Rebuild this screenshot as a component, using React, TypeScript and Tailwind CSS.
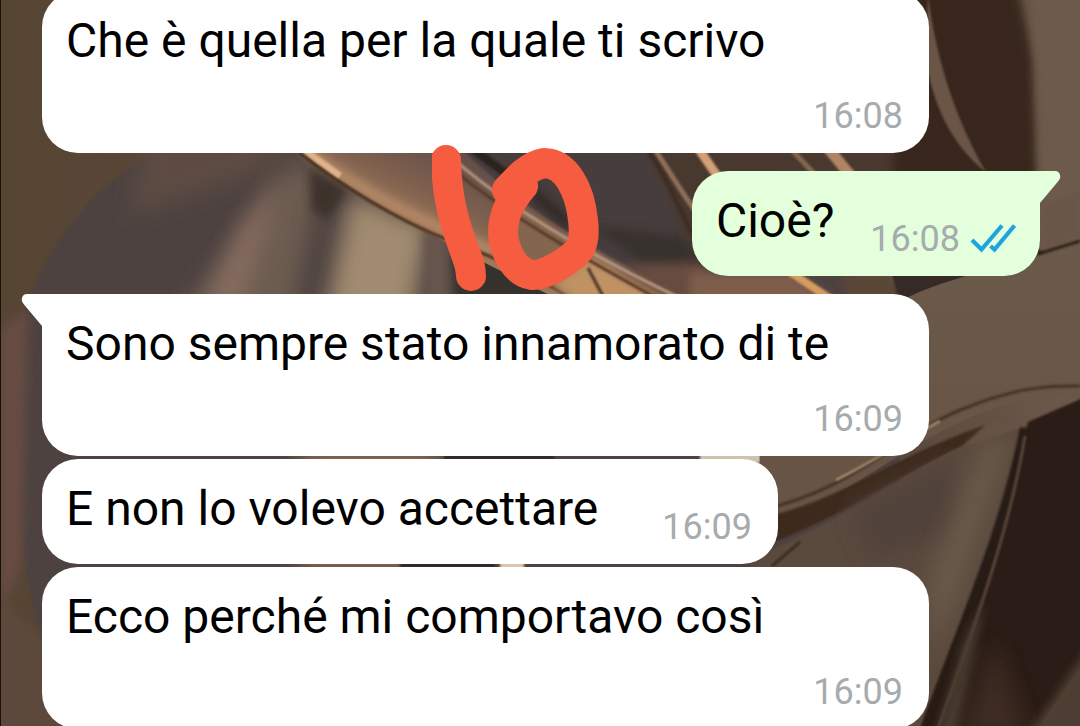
import { ReactNode } from "react";

function Wallpaper() {
  return (
    <svg
      className="absolute inset-0 h-full w-full"
      viewBox="0 0 1080 726"
      preserveAspectRatio="none"
      aria-hidden="true"
    >
      <defs>
        <filter id="fine" filterUnits="userSpaceOnUse" x="-60" y="-60" width="1200" height="850"><feGaussianBlur stdDeviation="1.2" /></filter>
        <filter id="mid" filterUnits="userSpaceOnUse" x="-60" y="-60" width="1200" height="850"><feGaussianBlur stdDeviation="5" /></filter>
        <filter id="wide" filterUnits="userSpaceOnUse" x="-60" y="-60" width="1200" height="850"><feGaussianBlur stdDeviation="11" /></filter>
        <linearGradient id="base" x1="0" y1="0" x2="1" y2="0">
          <stop offset="0" stopColor="#574534" />
          <stop offset="0.5" stopColor="#5a473c" />
          <stop offset="0.85" stopColor="#5b4a3e" />
          <stop offset="1" stopColor="#6d5a4b" />
        </linearGradient>
        <linearGradient id="gold" gradientUnits="userSpaceOnUse" x1="440" y1="150" x2="400" y2="230">
          <stop offset="0" stopColor="#65504a" />
          <stop offset="0.5" stopColor="#80614f" />
          <stop offset="1" stopColor="#a67d5c" />
        </linearGradient>
        <linearGradient id="arm" x1="0" y1="0" x2="0" y2="1">
          <stop offset="0" stopColor="#6b5949" />
          <stop offset="1" stopColor="#665345" />
        </linearGradient>
      </defs>
      <rect width="1080" height="726" fill="url(#base)" />

      <path d="M30 294 C60 225 110 170 170 148 L620 148 L900 300 L900 726 L70 726 C30 650 -10 420 30 294Z" fill="#4d433f" filter="url(#fine)" />
      <path d="M0 330 L28 310 L22 560 L0 620Z" fill="#664c43" filter="url(#mid)" />
      <path d="M150 120 L330 120 L250 176 L130 215Z" fill="#5d4b42" filter="url(#wide)" />
      <path d="M300 155 L170 330 L290 330 L320 180Z" fill="#6c5b4f" filter="url(#wide)" />
      <path d="M285 165 L240 310 L205 310 L240 230Z" fill="#876c60" filter="url(#wide)" />
      <path d="M350 195 L430 225 L410 330 L322 330Z" fill="#a08a70" filter="url(#wide)" />
      <path d="M310 168 L346 190 L328 220 L312 210Z" fill="#3d302b" filter="url(#mid)" />
      <path d="M424 230 L450 240 L452 330 L426 330Z" fill="#66544e" filter="url(#mid)" />
      <path d="M452 250 L560 270 L590 320 L456 320Z" fill="#35302d" filter="url(#mid)" />
      <rect x="300" y="450" width="140" height="120" fill="#8b6c58" filter="url(#wide)" />
      <rect x="444" y="450" width="110" height="12" fill="#302a27" filter="url(#fine)" />
      <rect x="400" y="560" width="95" height="10" fill="#302a27" filter="url(#fine)" />
      <rect x="700" y="453" width="60" height="10" fill="#cfc3b0" filter="url(#fine)" />
      <rect x="500" y="562" width="24" height="8" fill="#d8c6ae" filter="url(#fine)" />

      <path d="M302 153 L470 148 L720 310 L580 310 C500 270 400 225 302 153Z" fill="url(#gold)" />
      <path d="M306 150 C370 198 430 224 500 254" stroke="#b98e6a" strokeWidth="9" fill="none" filter="url(#mid)" />
      <path d="M304 150 L340 176" stroke="#dfb48c" strokeWidth="7" filter="url(#fine)" />
      <path d="M300 153 C340 186 400 221 450 241 C510 263 550 281 590 313" stroke="#4b3020" strokeWidth="3" fill="none" filter="url(#fine)" />
      <path d="M500 200 L590 240 L600 254 L560 284 L500 250Z" fill="#84654f" filter="url(#mid)" />
      <path d="M552 284 L590 256 L680 310 L590 310Z" fill="#c09263" filter="url(#mid)" />
      <path d="M588 268 L605 300" stroke="#4b3426" strokeWidth="3" filter="url(#fine)" />
      <path d="M470 148 L730 148 L730 300 L700 300 C610 262 530 215 460 148Z" fill="#463e3c" filter="url(#fine)" />
      <path d="M590 225 L710 240 L710 280 L640 262Z" fill="#38312f" filter="url(#mid)" />
      <path d="M620 266 L700 262 L740 310 L690 310Z" fill="#684c3f" filter="url(#mid)" />
      <path d="M450 156 C510 210 600 260 684 300" stroke="#b99a80" strokeWidth="3" fill="none" filter="url(#fine)" />
      <path d="M446 164 C510 217 580 256 660 300" stroke="#573a28" strokeWidth="3" fill="none" filter="url(#fine)" />
      <path d="M474 150 L512 178" stroke="#2c211c" strokeWidth="8" filter="url(#fine)" />
      <path d="M530 190 L570 225" stroke="#2d2522" strokeWidth="9" filter="url(#mid)" />

      <path d="M645 148 L900 148 L900 176 L720 180 L696 260 L665 190Z" fill="#49392f" filter="url(#mid)" />
      <path d="M655 150 C672 175 685 198 699 216" stroke="#8f7059" strokeWidth="5" fill="none" filter="url(#fine)" />
      <path d="M648 150 C668 180 678 205 692 234" stroke="#3e2c23" strokeWidth="4" fill="none" filter="url(#fine)" />
      <path d="M698 148 L720 180" stroke="#d3a077" strokeWidth="9" filter="url(#fine)" />
      <path d="M790 148 L820 180" stroke="#856750" strokeWidth="5" filter="url(#fine)" />
      <path d="M828 148 L854 180" stroke="#b08465" strokeWidth="11" filter="url(#fine)" />
      <path d="M690 272 L790 272 L850 310 L690 310Z" fill="#7e5d4b" filter="url(#mid)" />
      <path d="M790 272 L832 300" stroke="#d69b60" strokeWidth="8" filter="url(#fine)" />
      <path d="M840 270 L900 270 L900 310 L850 310Z" fill="#5a4639" filter="url(#mid)" />
      <path d="M891 270 L904 300" stroke="#806a54" strokeWidth="6" filter="url(#fine)" />

      <path d="M905 -20 L1016 -20 L1034 60 L1038 200 L890 200Z" fill="#37271f" filter="url(#mid)" />
      <path d="M928 -5 C936 60 956 120 986 172 C950 145 932 100 926 60Z" fill="#6a5546" filter="url(#fine)" />
      <path d="M1030 -20 L1100 -20 L1100 260 L1044 260 L1036 80Z" fill="#6d5a4b" filter="url(#mid)" />
      <path d="M1042 205 L1080 190 L1080 236 L1045 250Z" fill="#6b5748" filter="url(#fine)" />
      <path d="M890 270 L1040 250 L1044 253 L900 306Z" fill="#352a27" filter="url(#fine)" />

      <path d="M895 305 C930 280 1020 264 1080 242 L1080 400 C1000 390 940 430 860 480 L760 540 L760 440Z" fill="url(#arm)" />
      <path d="M1038 254 L1080 241" stroke="#2e211a" strokeWidth="3" fill="none" filter="url(#fine)" />
      <path d="M760 510 C850 492 900 435 960 410 C1010 390 1040 385 1080 386" stroke="#453025" strokeWidth="3" fill="none" filter="url(#fine)" />
      <path d="M836 480 C880 458 905 440 940 421" stroke="#b59778" strokeWidth="2" fill="none" filter="url(#fine)" />
      <path d="M740 522 C840 505 880 462 985 425 L962 446 C890 480 840 520 740 555Z" fill="#3c291e" filter="url(#fine)" />
      <path d="M750 560 C850 515 900 478 960 448 L1030 425 L925 726 L750 726Z" fill="#5a493d" filter="url(#fine)" />
      <path d="M850 510 L950 460 L960 530 L870 560Z" fill="#51423b" filter="url(#wide)" />
      <path d="M1010 440 L960 590 L928 660 L930 580 L985 440Z" fill="#6a5a4a" filter="url(#wide)" />
      <path d="M772 566 L800 542" stroke="#2e2018" strokeWidth="2" filter="url(#fine)" />

      <path d="M1028 422 L1090 395 L1090 655 L1030 740 L918 740 C946 650 990 570 1028 422Z" fill="#2c1d15" filter="url(#fine)" />
      <path d="M1024 428 C1004 530 960 630 922 736" stroke="#281a12" strokeWidth="8" fill="none" filter="url(#fine)" />
      <path d="M1025 436 C1010 530 970 640 934 740" stroke="#56463a" strokeWidth="3" fill="none" filter="url(#fine)" />
      <path d="M985 600 L955 740 L935 740 L965 640Z" fill="#4a3c33" filter="url(#mid)" />
      <path d="M996 640 L1030 740 L955 740Z" fill="#3c2c22" filter="url(#wide)" />
      <path d="M1090 645 L1025 740 L1090 740Z" fill="#4e3d30" filter="url(#mid)" />
      <path d="M-10 590 C20 615 35 635 60 650 L60 740 L-10 740Z" fill="#5b493b" filter="url(#mid)" />
      <rect width="1" height="726" fill="#17110c" />
    </svg>
  );
}

function Ticks() {
  return (
    <svg className="h-[30px] w-[46px]" viewBox="0 0 46 30" fill="none" stroke="#1fa3e0" strokeWidth="4.2" role="img" aria-label="Letto">
      <path d="M2 16 L11.500 25.500 L32 1.500" />
      <path d="M20.500 22 L24.500 25.500 L44.500 1.500" />
    </svg>
  );
}

function Scribble() {
  return (
    <svg className="pointer-events-none absolute left-[40%] top-[140px] h-[155px] w-[170px]" viewBox="432 140 170 155" fill="none" stroke="#f65c3f" strokeWidth="30" strokeLinecap="round" strokeLinejoin="round" aria-hidden="true">
      <path d="M446 160 C447 200 455 225 464 249 C469 262 471 268 471 276" />
      <path d="M507 190 C519 177 529 166 544 163 C566 163 580 190 583 220 C586 245 580 252 566 261 C553 270 542 275 532 275 C514 272 504 250 503 233 C503 214 511 200 523 186 L507 190" />
    </svg>
  );
}

type BubbleProps = { children: ReactNode; time: string; wide?: boolean; sent?: boolean; tail?: boolean };

function Bubble({ children, time, wide, sent, tail }: BubbleProps) {
  const shape = sent ? "self-end bg-[#e4ffdb] pr-6" : "self-start bg-white pr-[26px]";
  const flow = wide ? "w-[887px] max-w-full flex-col gap-[15px]" : sent ? "items-end gap-9" : "items-end gap-16";
  const corner = !tail ? "rounded-[36px]" : sent ? "rounded-[36px] rounded-tr-none" : "rounded-[36px] rounded-tl-none";
  return (
    <article className={`relative flex pt-[22px] pb-4 pl-6 ${shape} ${flow} ${corner}`}>
      {tail && (
        <svg
          className={sent ? "absolute -right-[21px] top-0 h-[34px] w-[22px]" : "absolute -left-[21px] top-0 h-[34px] w-[22px] -scale-x-100"}
          viewBox="0 0 22 34"
          fill={sent ? "#e4ffdb" : "#ffffff"}
          aria-hidden="true"
        >
          <path d="M0 0 H16 Q20 0 21 4 Q22 7 19 10.500 L1 32 L0 34Z" />
        </svg>
      )}
      <p className="mb-[11px] text-5xl leading-[56px] text-black">{children}</p>
      <div className="flex items-center gap-[10px] self-end text-4xl leading-[42px] text-[#a6abad]">
        <time>{time}</time>
        {sent && <Ticks />}
      </div>
    </article>
  );
}

export default function App() {
  return (
    <main className="relative h-screen overflow-hidden bg-[#574534] font-['Roboto',sans-serif]">
      <Wallpaper />
      <section className="relative -mt-[9px] flex flex-col gap-[3px] pl-[42px] pr-10" aria-label="Chat">
        <Bubble wide time="16:08">Che è quella per la quale ti scrivo</Bubble>
        <div className="flex flex-col py-[15px]">
          <Bubble sent tail time="16:08">Cioè?</Bubble>
        </div>
        <Bubble wide tail time="16:09">Sono sempre stato innamorato di te</Bubble>
        <Bubble time="16:09">E non lo volevo accettare</Bubble>
        <Bubble wide time="16:09">Ecco perché mi comportavo così</Bubble>
      </section>
      <Scribble />
    </main>
  );
}
